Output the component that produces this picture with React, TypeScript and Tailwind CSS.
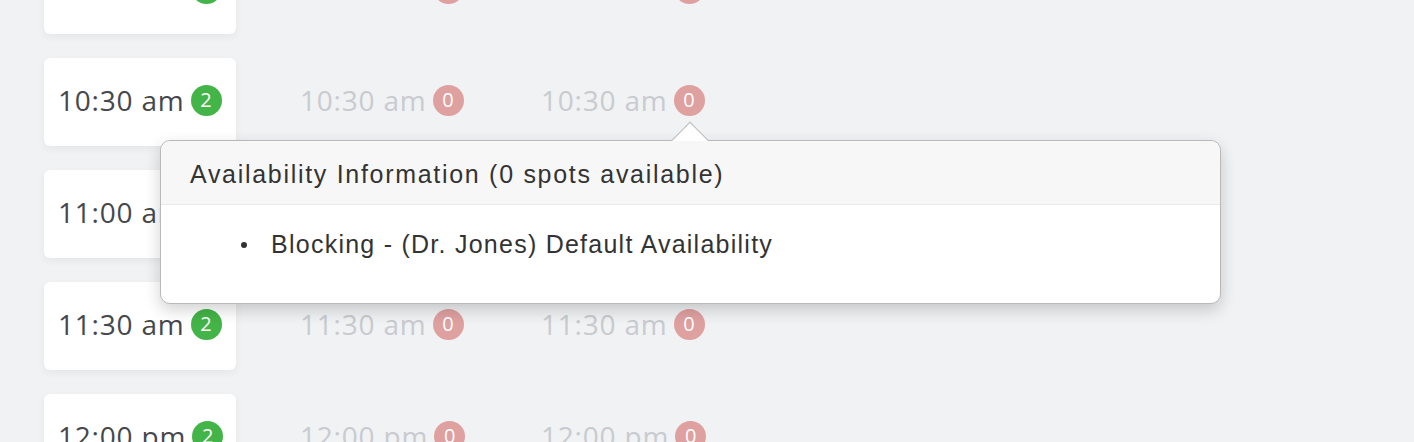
import React from 'react';

type Slot = { time: string; spots: number };

const ROWS: Slot[][] = [
  [{ time: '10:00 am', spots: 2 }, { time: '10:00 am', spots: 0 }, { time: '10:00 am', spots: 0 }],
  [{ time: '10:30 am', spots: 2 }, { time: '10:30 am', spots: 0 }, { time: '10:30 am', spots: 0 }],
  [{ time: '11:00 am', spots: 2 }, { time: '11:00 am', spots: 0 }, { time: '11:00 am', spots: 0 }],
  [{ time: '11:30 am', spots: 2 }, { time: '11:30 am', spots: 0 }, { time: '11:30 am', spots: 0 }],
  [{ time: '12:00 pm', spots: 2 }, { time: '12:00 pm', spots: 0 }, { time: '12:00 pm', spots: 0 }],
];

const timeFont = { fontFamily: '"Open Sans", "Noto Sans", sans-serif' };
const popFont = { fontFamily: '"Liberation Sans", Arial, sans-serif' };

const Badge: React.FC<{ n: number }> = ({ n }) => (
  <span
    className={`ml-[6px] inline-flex h-[31px] w-[31px] items-center justify-center rounded-full text-[20px] leading-none tracking-normal text-white ${n > 0 ? 'bg-[#43b447]' : 'bg-[#dfa0a0]'}`}
  >
    {n}
  </span>
);

const SlotRow: React.FC<{ slots: Slot[] }> = ({ slots }) => (
  <div className="flex items-center" style={timeFont}>
    <div className="flex h-[88px] w-[192px] items-center rounded-[6px] bg-white pb-[4px] pl-[14px] shadow-[0_3px_8px_rgba(0,0,0,0.05)]">
      <span className="text-[28px] tracking-[0.8px] text-[#45484d]">{slots[0].time}</span>
      <Badge n={slots[0].spots} />
    </div>
    {slots.slice(1).map((s, i) => (
      <div key={i} className={`mb-[4px] flex items-center ${i === 0 ? 'ml-[64px] w-[241px]' : 'w-[241px]'}`}>
        <span className="text-[28px] tracking-[0.8px] text-[#c8cbcf]">{s.time}</span>
        <Badge n={s.spots} />
      </div>
    ))}
  </div>
);

export default function App() {
  return (
    <div className="relative h-[442px] w-[1414px] overflow-hidden bg-[#f1f2f4]">
      <div className="-mt-[54px] flex flex-col gap-[24px] pl-[44px]">
        {ROWS.map((r, i) => (
          <SlotRow key={i} slots={r} />
        ))}
      </div>

      {/* availability popover */}
      <div
        className="absolute left-[160px] top-[140px] w-[1061px] rounded-[10px] border border-[#b9b9b9] bg-white shadow-[0_6px_16px_rgba(0,0,0,0.18)]"
        style={popFont}
      >
        <div className="absolute -top-[14px] left-[516px] h-[26px] w-[26px] rotate-45 border-l border-t border-[#b9b9b9] bg-white" />
        <div className="relative flex h-[64px] items-center rounded-t-[10px] border-b border-[#e9e9e9] bg-[#f7f7f7] pl-[29px] pt-[4px] text-[25px] tracking-[1.7px] text-[#333]">
          Availability Information (0 spots available)
        </div>
        <ul className="h-[98px] pl-[80px] pt-[21px] text-[25px] tracking-[1.25px] text-[#333]">
          <li className="flex items-center">
            <span className="mr-[24px] h-[6px] w-[6px] rounded-full bg-[#333]" />
            <span>Blocking - (Dr. Jones) Default Availability</span>
          </li>
        </ul>
      </div>
    </div>
  );
}
